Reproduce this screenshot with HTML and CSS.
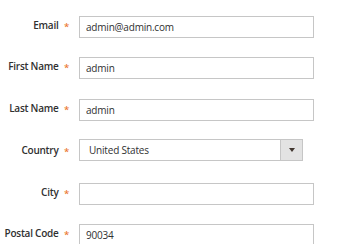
FILE: index.html
```html
<!DOCTYPE html>
<html>
<head>
<meta charset="utf-8">
<link rel="stylesheet" href="styles.css">
</head>
<body>
<form class="form">
  <div class="row">
    <label class="label">Email</label><span class="req">*</span>
    <div class="control"><input class="input" type="text" value="admin@admin.com"></div>
  </div>
  <div class="row">
    <label class="label">First Name</label><span class="req">*</span>
    <div class="control"><input class="input" type="text" value="admin"></div>
  </div>
  <div class="row">
    <label class="label">Last Name</label><span class="req">*</span>
    <div class="control"><input class="input" type="text" value="admin"></div>
  </div>
  <div class="row">
    <label class="label">Country</label><span class="req">*</span>
    <div class="control select">
      <span class="select-value">United States</span>
      <span class="select-btn"><span class="arrow"></span></span>
    </div>
  </div>
  <div class="row">
    <label class="label">City</label><span class="req">*</span>
    <div class="control"><input class="input" type="text" value=""></div>
  </div>
  <div class="row">
    <label class="label">Postal Code</label><span class="req">*</span>
    <div class="control"><input class="input" type="text" value="90034"></div>
  </div>
</form>
</body>
</html>
```
FILE: styles.css
```css
html, body {
  margin: 0;
  padding: 0;
  background: #ffffff;
}
body {
  font-family: "Open Sans", "DejaVu Sans", sans-serif;
  color: #303030;
}
.form {
  display: flex;
  flex-direction: column;
  gap: 19.8px;
  padding-top: 13.5px;
}
.row {
  display: flex;
  align-items: center;
  height: 22px;
}
.label {
  width: 58.5px;
  text-align: right;
  font-size: 10px;
  letter-spacing: -0.25px;
  font-weight: 600;
  color: #303030;
  white-space: nowrap;
}
.req {
  width: 16px;
  margin-right: 4.5px;
  text-align: center;
  color: #eb7b33;
  font-size: 9.5px;
  font-weight: 600;
  padding-top: 3px;
}
.control {
  width: 235px;
  height: 22px;
  box-sizing: border-box;
}
.input {
  width: 100%;
  height: 100%;
  box-sizing: border-box;
  border: 1px solid #c6c6c6;
  background: #fff;
  margin: 0;
  padding: 0 6px;
  font-family: "Open Sans", "DejaVu Sans", sans-serif;
  font-size: 10px;
  letter-spacing: -0.2px;
  color: #303030;
  outline: none;
}
.select {
  width: 224px;
  display: flex;
  border: 1px solid #c6c6c6;
  background: #fff;
}
.select-value {
  flex: 1;
  display: flex;
  align-items: center;
  padding-left: 9px;
  font-size: 10px;
  letter-spacing: -0.2px;
  color: #303030;
}
.select-btn {
  width: 21px;
  background: #e3e3e3;
  border-left: 1px solid #c6c6c6;
  display: flex;
  align-items: center;
  justify-content: center;
}
.arrow {
  width: 0;
  height: 0;
  border-left: 3px solid transparent;
  border-right: 3px solid transparent;
  border-top: 4px solid #41362f;
}
```
